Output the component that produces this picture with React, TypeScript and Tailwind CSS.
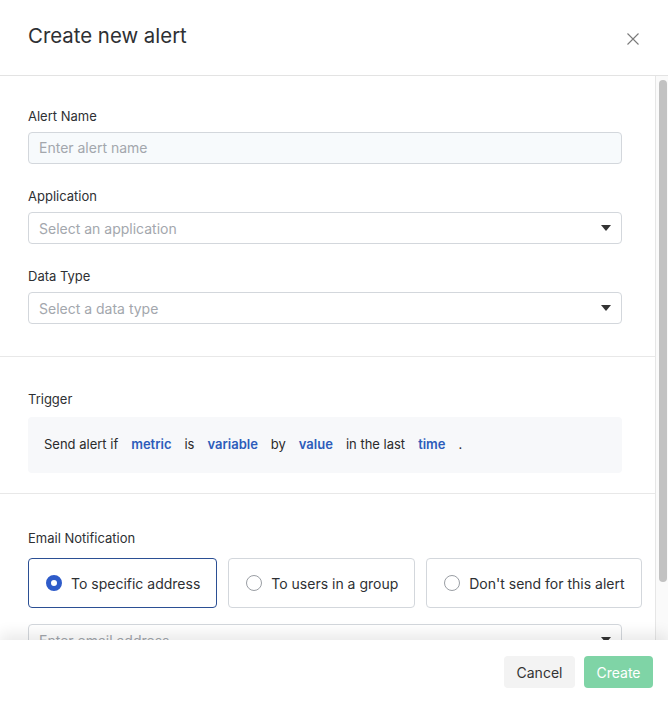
import { useState } from 'react'

type Target = 'address' | 'group' | 'none'

const TARGETS: { id: Target; label: string }[] = [
  { id: 'address', label: 'To specific address' },
  { id: 'group', label: 'To users in a group' },
  { id: 'none', label: "Don't send for this alert" },
]

export default function App() {
  const [target, setTarget] = useState<Target>('address')

  return (
    <div
      className="w-[668px] h-[702px] bg-white flex flex-col overflow-hidden text-[#333]"
      style={{ fontFamily: 'Inter, "Noto Sans", sans-serif' }}
    >
      {/* Header */}
      <div className="h-[76px] shrink-0 border-b border-[#e3e3e3] flex items-center justify-between pl-[28px] pr-[28px]">
        <h1 className="text-[20.4px] font-normal text-[#2e3033] -mt-[2px]">Create new alert</h1>
        <button className="w-[14px] h-[14px] flex items-center justify-center mt-[2px]">
          <svg width="12" height="12" viewBox="0 0 12 12" fill="none" stroke="#7a7a7a" strokeWidth="1.1">
            <path d="M0.5 0.5 L11.5 11.5 M11.5 0.5 L0.5 11.5" />
          </svg>
        </button>
      </div>

      {/* Body */}
      <div className="flex-1 min-h-0 flex">
        <div className="flex-1 min-w-0 overflow-hidden">
          {/* Details */}
          <section className="pt-[30px] pb-[32px] px-[28px] border-b border-[#e8e8e8] flex flex-col">
            <FieldLabel>Alert Name</FieldLabel>
            <input
              placeholder="Enter alert name"
              className="w-[594px] h-[32px] rounded-[4px] border border-[#d3d7dc] bg-[#f7fafc] px-[10px] pb-[1px] text-[14px] placeholder:text-[#a3a7ad] outline-none"
            />
            <div className="h-[22px]" />
            <FieldLabel>Application</FieldLabel>
            <SelectBox placeholder="Select an application" />
            <div className="h-[22px]" />
            <FieldLabel>Data Type</FieldLabel>
            <SelectBox placeholder="Select a data type" />
          </section>

          {/* Trigger */}
          <section className="pt-[32px] pb-[20px] px-[28px] border-b border-[#e8e8e8] flex flex-col">
            <FieldLabel>Trigger</FieldLabel>
            <div className="mt-[2px] w-[594px] h-[56px] rounded-[4px] bg-[#f7f8fa] flex items-center gap-[13px] px-[16px] text-[13px] text-[#2b2b2b]">
              <span>Send alert if</span>
              <Token>metric</Token>
              <span>is</span>
              <Token>variable</Token>
              <span>by</span>
              <Token>value</Token>
              <span>in the last</span>
              <Token>time</Token>
              <span>.</span>
            </div>
          </section>

          {/* Email */}
          <section className="pt-[34px] px-[28px] flex flex-col">
            <FieldLabel>Email Notification</FieldLabel>
            <div className="mt-[4px] flex gap-[11px]">
              {TARGETS.map(t => {
                const on = t.id === target
                return (
                  <button
                    key={t.id}
                    onClick={() => setTarget(t.id)}
                    className={`shrink-0 h-[50px] rounded-[4px] border flex items-center gap-[9px] pl-[17px] pr-[16px] text-[14px] text-[#2e3033] whitespace-nowrap ${
                      on ? 'border-[#2b4f94]' : 'border-[#d3d7dc]'
                    }`}
                  >
                    <span
                      className={`w-[16px] h-[16px] rounded-full ${
                        on ? 'border-[5px] border-[#2e5bc9]' : 'border border-[#9a9ea4]'
                      }`}
                    />
                    {t.label}
                  </button>
                )
              })}
            </div>
            <div className="h-[16px]" />
            <SelectBox placeholder="Enter email address" />
          </section>
        </div>

        {/* Scrollbar */}
        <div className="w-[13px] shrink-0 border-l border-[#e6e6e6] bg-[#fafafa] pt-[4px] pl-[3px]">
          <div className="w-[8px] h-[502px] rounded-full bg-[#c2c2c2]" />
        </div>
      </div>

      {/* Footer */}
      <div className="relative z-10 h-[62px] shrink-0 bg-white shadow-[0_-6px_14px_rgba(0,0,0,0.09)] flex items-center justify-end gap-[9px] pr-[15px] pt-[2px]">
        <button className="h-[32px] w-[71px] rounded-[4px] bg-[#f3f3f3] text-[14px] text-[#333]">Cancel</button>
        <button className="h-[32px] w-[69px] rounded-[4px] bg-[#7fd4a6] text-[14px] text-white">Create</button>
      </div>
    </div>
  )
}

function FieldLabel({ children }: { children: React.ReactNode }) {
  return <label className="text-[13px] leading-[20px] text-[#2e3033] mb-[6px]">{children}</label>
}

function Token({ children }: { children: React.ReactNode }) {
  return <span className="font-semibold text-[#2d5cba]">{children}</span>
}

function SelectBox({ placeholder }: { placeholder: string }) {
  return (
    <div className="w-[594px] h-[32px] shrink-0 rounded-[4px] border border-[#d3d7dc] bg-white flex items-center justify-between pl-[10px] pr-[10px]">
      <span className="text-[14px] text-[#a3a7ad]">{placeholder}</span>
      <svg width="10" height="6" viewBox="0 0 10 6">
        <path d="M0 0 H10 L5 6 Z" fill="#333" />
      </svg>
    </div>
  )
}
